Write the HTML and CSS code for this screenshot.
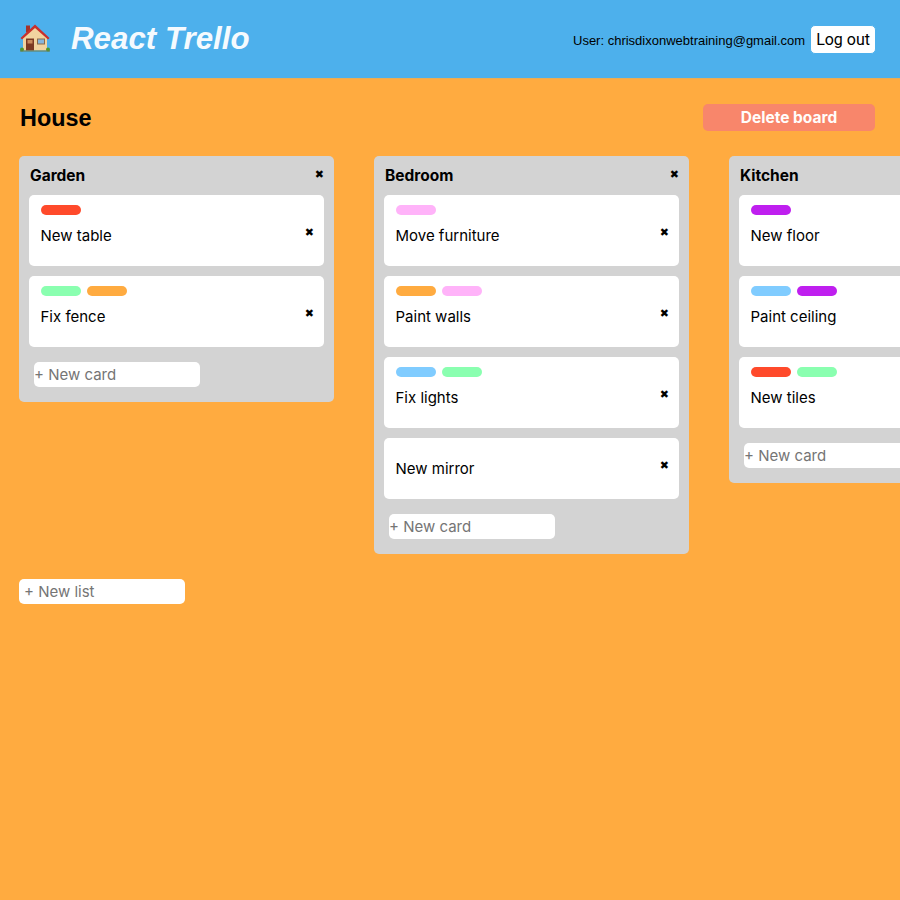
FILE: index.html
```html
<html>
<head>
     <title>React Trello</title>
     <link rel="stylesheet" href="styles.css">
</head>
<body>
     <header class="site-header">
          <div class="brand">
               <svg class="brand-icon" width="30" height="30" viewBox="1 2.500 30 28">
                    <rect x="7" y="4" width="4" height="7" fill="#a5332a"/>
                    <path d="M16 5 L28 16 V29 H4 V16 Z" fill="#f1d4a0"/>
                    <path d="M1.500 16.500 L16 3 L30.500 16.500 L29 18 L16 6.500 L3 18 Z" fill="#c8302c"/>
                    <rect x="7" y="17" width="8" height="12" fill="#7c3a22"/>
                    <rect x="8.500" y="18.500" width="5" height="3.500" fill="#c98a5c"/>
                    <rect x="18" y="17" width="8" height="6" fill="#8a6a4a"/>
                    <rect x="19" y="18" width="6" height="4" fill="#86b6dc"/>
                    <circle cx="3" cy="28" r="2" fill="#4f9a2c"/>
                    <circle cx="29" cy="28" r="2" fill="#4f9a2c"/>
                    <rect x="1" y="29" width="30" height="1" fill="#6b7a4a"/>
               </svg>
               <h1>React Trello</h1>
          </div>
          <div class="user-area">
               <span class="user-name">User: chrisdixonwebtraining@gmail.com</span>
               <button class="logout-btn">Log out</button>
          </div>
     </header>

     <main class="board">
          <div class="board-header">
               <h2>House</h2>
               <button class="delete-board">Delete board</button>
          </div>

          <div class="lists">
               <section class="list">
                    <div class="list-header">
                         <h3>Garden</h3>
                         <span class="close">&#10006;</span>
                    </div>
                    <div class="card">
                         <div class="labels"><span class="label red"></span></div>
                         <div class="card-body"><p>New table</p><span class="close">&#10006;</span></div>
                    </div>
                    <div class="card">
                         <div class="labels"><span class="label green"></span><span class="label orange"></span></div>
                         <div class="card-body"><p>Fix fence</p><span class="close">&#10006;</span></div>
                    </div>
                    <input class="new-card" type="text" placeholder="+ New card">
               </section>

               <section class="list">
                    <div class="list-header">
                         <h3>Bedroom</h3>
                         <span class="close">&#10006;</span>
                    </div>
                    <div class="card">
                         <div class="labels"><span class="label pink"></span></div>
                         <div class="card-body"><p>Move furniture</p><span class="close">&#10006;</span></div>
                    </div>
                    <div class="card">
                         <div class="labels"><span class="label orange"></span><span class="label pink"></span></div>
                         <div class="card-body"><p>Paint walls</p><span class="close">&#10006;</span></div>
                    </div>
                    <div class="card">
                         <div class="labels"><span class="label blue"></span><span class="label green"></span></div>
                         <div class="card-body"><p>Fix lights</p><span class="close">&#10006;</span></div>
                    </div>
                    <div class="card">
                         <div class="card-body"><p>New mirror</p><span class="close">&#10006;</span></div>
                    </div>
                    <input class="new-card" type="text" placeholder="+ New card">
               </section>

               <section class="list">
                    <div class="list-header">
                         <h3>Kitchen</h3>
                         <span class="close">&#10006;</span>
                    </div>
                    <div class="card">
                         <div class="labels"><span class="label purple"></span></div>
                         <div class="card-body"><p>New floor</p><span class="close">&#10006;</span></div>
                    </div>
                    <div class="card">
                         <div class="labels"><span class="label blue"></span><span class="label purple"></span></div>
                         <div class="card-body"><p>Paint ceiling</p><span class="close">&#10006;</span></div>
                    </div>
                    <div class="card">
                         <div class="labels"><span class="label red"></span><span class="label green"></span></div>
                         <div class="card-body"><p>New tiles</p><span class="close">&#10006;</span></div>
                    </div>
                    <input class="new-card" type="text" placeholder="+ New card">
               </section>
          </div>

          <input class="new-list" type="text" placeholder="+ New list">
     </main>
</body>
</html>
```
FILE: styles.css
```css
html, body {
     margin: 0;
     height: 100%;
     overflow: hidden;
}

body {
     font-family: "Inter", "Liberation Sans", sans-serif;
     background-color: #ffab40;
     color: #000;
}

.site-header {
     display: flex;
     justify-content: space-between;
     align-items: center;
     height: 78px;
     padding: 0 24px 0 19px;
     background-color: #4db0ec;
     border-bottom: 1px solid #e8ad58;
     font-family: "Liberation Sans", sans-serif;
}

.brand {
     display: flex;
     align-items: center;
}

.brand-icon {
     margin: 0 21px 3px 1px;
}

.brand h1 {
     margin: 0 0 1px;
     font-size: 31.300px;
     font-style: italic;
     font-weight: bold;
     color: #fff;
     opacity: 0.95;
}

.user-area {
     display: flex;
     align-items: center;
     gap: 5px;
}

.user-name {
     margin-top: 2px;
     font-size: 13px;
}

.logout-btn {
     height: 29px;
     padding: 0 5px;
     background-color: #fff;
     border: 1px solid #4db0ec;
     border-radius: 5px;
     font-family: "Roboto", sans-serif;
     font-size: 16px;
     color: #000;
}

.board {
     padding: 25px 25px 0 19px;
}

.board-header {
     display: flex;
     justify-content: space-between;
     align-items: center;
     margin-bottom: 25px;
     height: 27px;
}

.board-header h2 {
     margin: 2px 0 0 1px;
     font-family: "Liberation Sans", sans-serif;
     font-size: 23.400px;
     font-weight: bold;
}

.delete-board {
     width: 172px;
     height: 27px;
     padding: 0;
     background-color: #f8866c;
     border: none;
     border-radius: 5px;
     font-family: "Inter", sans-serif;
     font-size: 15.500px;
     font-weight: 700;
     color: #fff;
     opacity: 0.98;
}

.lists {
     display: flex;
     align-items: flex-start;
     gap: 40px;
     width: 1200px;
}

.list {
     flex: none;
     width: 315px;
     box-sizing: border-box;
     padding: 0 10px 15px;
     background-color: #d3d3d3;
     border-radius: 5px;
}

.list-header {
     display: flex;
     justify-content: space-between;
     align-items: center;
     height: 39px;
}

.list-header h3 {
     margin: 0 0 0 1px;
     font-size: 15.500px;
     font-weight: 700;
}

.list-header .close {
     margin-bottom: 3px;
}

.close {
     font-size: 11px;
     line-height: 1;
     font-family: "DejaVu Sans", sans-serif;
}

.card {
     margin-bottom: 10px;
     background-color: #fff;
     border-radius: 5px;
     padding: 10px 10px 0 12px;
}

.labels {
     display: flex;
     gap: 6px;
}

.label {
     width: 40px;
     height: 10px;
     border-radius: 5px;
}

.red { background-color: #ff4a2b; }
.green { background-color: #8affb0; }
.orange { background-color: #ffab40; }
.pink { background-color: #ffb3f9; }
.blue { background-color: #80ccff; }
.purple { background-color: #bf1fef; }

.card-body {
     display: flex;
     justify-content: space-between;
     align-items: flex-start;
     height: 51px;
     box-sizing: border-box;
     padding-top: 10px;
}

.card-body p {
     margin: 0 0 0 -0.500px;
     font-size: 15px;
     line-height: 21px;
}

.card-body .close {
     margin-top: 2px;
}

.new-card,
.new-list {
     display: block;
     width: 166px;
     height: 25px;
     box-sizing: border-box;
     background-color: #fff;
     border: none;
     border-radius: 5px;
     font-family: "Inter", sans-serif;
     font-size: 15px;
}

.new-card {
     margin: 15px 0 0 5px;
     padding: 0;
}

.new-list {
     margin-top: 25px;
     padding: 0 5px;
}
```
